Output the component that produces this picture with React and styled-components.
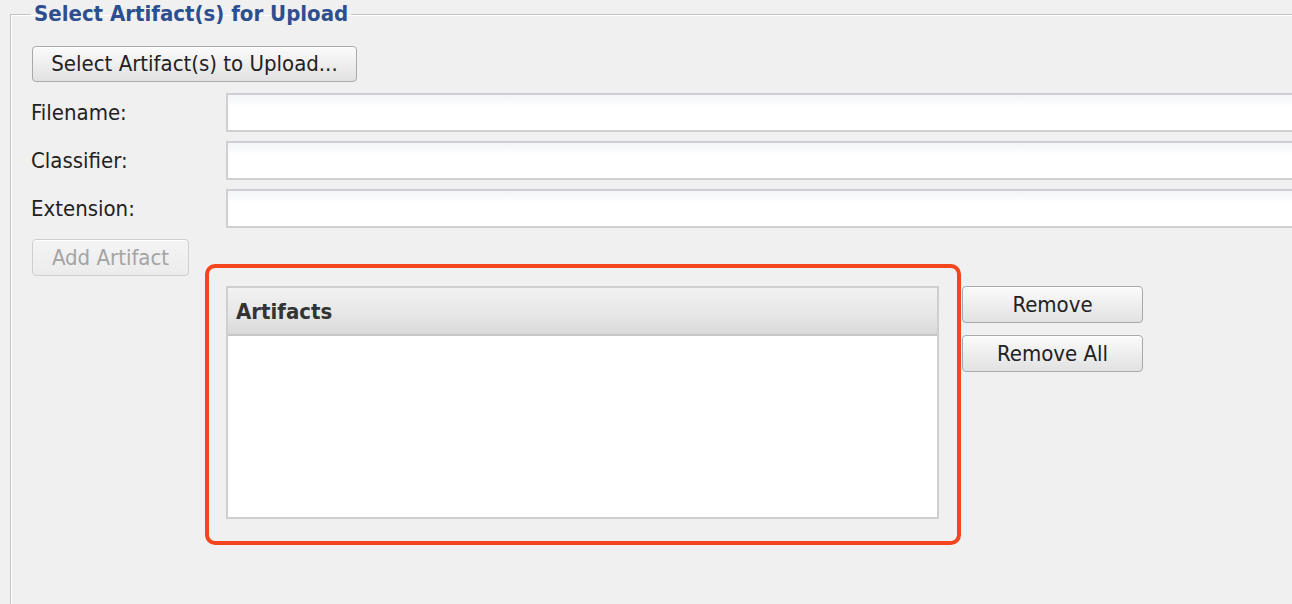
import React from "react";
import styled, { createGlobalStyle } from "styled-components";

const GlobalStyle = createGlobalStyle`
  html, body {
    margin: 0;
    padding: 0;
    background: #f0f0f0;
    overflow: hidden;
  }
  body {
    font-family: "DejaVu Sans Condensed", "DejaVu Sans", sans-serif;
    color: #222;
  }
`;

const Page = styled.div`
  position: relative;
  width: 1292px;
  height: 604px;
  overflow: hidden;
  padding-left: 10px;
  box-sizing: border-box;
`;

const Fieldset = styled.fieldset`
  margin: 0;
  margin-top: 1px;
  width: 1320px;
  height: 640px;
  box-sizing: border-box;
  border: 1px solid #c4c4c8;
  box-shadow: inset 1px 1px 0 #ffffff, 1px 1px 0 #ffffff;
  padding: 12px 0 0 20px;
`;

const Legend = styled.legend`
  padding: 0 3px;
  margin-left: 0;
  font-size: 22px;
  font-weight: bold;
  color: #2d4f8f;
  line-height: 26px;
`;

const Button = styled.button`
  display: flex;
  align-items: center;
  justify-content: center;
  box-sizing: border-box;
  width: ${(p) => p.$w}px;
  height: ${(p) => p.$h || 37}px;
  padding: 0;
  font-family: inherit;
  font-size: 22px;
  line-height: 1;
  color: ${(p) => (p.disabled ? "#a4a4a4" : "#222")};
  border: 1px solid ${(p) => (p.disabled ? "#cfcfcf" : "#a9a9ab")};
  border-radius: 4px;
  background: ${(p) =>
    p.disabled
      ? "linear-gradient(#f4f4f4, #ececec)"
      : "linear-gradient(#fbfbfb 0%, #eeeeee 50%, #e2e2e2 100%)"};
  box-shadow: inset 0 1px 0 #ffffff;
`;

const TopRow = styled.div`
  margin-top: 7px;
  margin-left: 1px;
`;

const Form = styled.div`
  display: grid;
  grid-template-columns: 195px 1fr;
  row-gap: 9px;
  margin-top: 11px;
  align-items: center;
`;

const Label = styled.label`
  font-size: 22px;
  color: #222;
`;

const Input = styled.div`
  height: 39px;
  box-sizing: border-box;
  border: 2px solid #cfcfd3;
  border-right: none;
  background: linear-gradient(#f3f5f7 0px, #ffffff 12px);
`;

const AddRow = styled.div`
  margin-top: 11px;
  margin-left: 1px;
`;

const ListArea = styled.div`
  display: flex;
  gap: 23px;
  margin-top: 10px;
  margin-left: 195px;
`;

const Table = styled.div`
  width: 713px;
  height: 233px;
  box-sizing: border-box;
  border: 2px solid #cfcfcf;
  background: #fff;
  display: flex;
  flex-direction: column;
`;

const TableHeader = styled.div`
  height: 48px;
  box-sizing: border-box;
  border-bottom: 2px solid #c6c6c6;
  background: linear-gradient(#f2f2f2 0%, #e6e6e6 60%, #d9d9d9 100%);
  display: flex;
  align-items: center;
  padding-left: 8px;
  font-size: 22px;
  font-weight: bold;
  color: #333;
`;

const SideButtons = styled.div`
  display: flex;
  flex-direction: column;
  gap: 12px;
`;

const Highlight = styled.div`
  position: absolute;
  left: 205px;
  top: 264px;
  width: 756px;
  height: 281px;
  box-sizing: border-box;
  border: 4px solid #f5451f;
  border-radius: 10px;
  pointer-events: none;
`;

const fields = ["Filename:", "Classifier:", "Extension:"];

export default function App() {
  return (
    <Page>
      <GlobalStyle />
      <Fieldset>
        <Legend>Select Artifact(s) for Upload</Legend>
        <TopRow>
          <Button $w={325} $h={36}>
            Select Artifact(s) to Upload...
          </Button>
        </TopRow>
        <Form>
          {fields.map((f) => (
            <React.Fragment key={f}>
              <Label>{f}</Label>
              <Input />
            </React.Fragment>
          ))}
        </Form>
        <AddRow>
          <Button $w={157} disabled>
            Add Artifact
          </Button>
        </AddRow>
        <ListArea>
          <Table>
            <TableHeader>Artifacts</TableHeader>
          </Table>
          <SideButtons>
            <Button $w={181}>Remove</Button>
            <Button $w={181}>Remove All</Button>
          </SideButtons>
        </ListArea>
      </Fieldset>
      <Highlight />
    </Page>
  );
}
